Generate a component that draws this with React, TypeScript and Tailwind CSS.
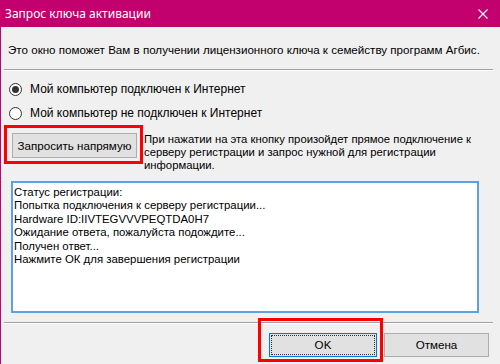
const font = { fontFamily: '"Liberation Sans", Arial, sans-serif' };

const Radio = ({ checked, label }: { checked?: boolean; label: string }) => (
  <div className="flex items-center h-[16px]">
    <div className="ml-[8px] w-[13px] h-[13px] rounded-full border border-[#333333] bg-white flex items-center justify-center">
      {checked && <div className="w-[7px] h-[7px] rounded-full bg-[#333333]" />}
    </div>
    <span className="ml-[8px] text-[12px] text-black">{label}</span>
  </div>
);

const Separator = ({ className }: { className?: string }) => (
  <div className={"h-[2px] border-t border-[#a0a0a0] border-b border-b-white " + (className || "")} />
);

export default function App() {
  const log = [
    "Статус регистрации:",
    "Попытка подключения к серверу регистрации...",
    "Hardware ID:IIVTEGVVVPEQTDA0H7",
    "Ожидание ответа, пожалуйста подождите...",
    "Получен ответ...",
    "Нажмите ОК для завершения регистрации",
  ];

  return (
    <div className="w-[500px] h-[364px] overflow-hidden bg-[#f0f0f0] border-l border-[#c2006e] flex flex-col" style={font}>
      {/* title bar */}
      <div className="h-[27px] shrink-0 bg-[#c2006e] flex items-center justify-between pl-[4px] pr-[12px]">
        <span className="text-white text-[12px]" style={{ fontFamily: '"Noto Sans", "Open Sans", sans-serif' }}>
          Запрос ключа активации
        </span>
        <svg width="10" height="10" viewBox="0 0 10 10">
          <path d="M0.5 0.5 L9.5 9.5 M9.5 0.5 L0.5 9.5" stroke="white" strokeWidth="1.1" />
        </svg>
      </div>

      <div className="flex flex-col">
        <p className="mt-[16px] ml-[7px] h-[14px] leading-[14px] text-[11.6px] text-black whitespace-nowrap">
          Это окно поможет Вам в получении лицензионного ключа к семейству программ Агбис.
        </p>

        <Separator className="mt-[12px] ml-[3px] mr-[7px]" />

        <div className="mt-[10px] flex flex-col gap-[8px]">
          <Radio checked label="Мой компьютер подключен к Интернет" />
          <Radio label="Мой компьютер не подключен к Интернет" />
        </div>

        <div className="mt-[12px] flex items-start h-[39px]">
          <div className="relative ml-[11px]">
            <button className="w-[125px] h-[25px] bg-[#e1e1e1] border border-[#adadad] text-[11.6px] text-black">
              Запросить напрямую
            </button>
            <div className="absolute -left-[8px] -right-[6px] -top-[8px] -bottom-[6px] border-[3px] border-[#ff0000]" />
          </div>
          <p className="ml-[7px] text-[11.3px] leading-[13px] text-black w-[336px]">
            При нажатии на эта кнопку произойдет прямое подключение к серверу регистрации и запрос нужной для регистрации информации.
          </p>
        </div>

        <div className="mt-[9px] ml-[10px] w-[468px] h-[132px] bg-white border-2 border-[#5ba1e3] px-[1px] pt-[3px]">
          {log.map((l) => (
            <div key={l} className="text-[11.4px] leading-[13.4px] text-black whitespace-nowrap">
              {l}
            </div>
          ))}
        </div>

        <Separator className="mt-[9px] ml-[3px] mr-[7px]" />

        <div className="mt-[9px] flex justify-end items-center pr-[11px] gap-[7px]">
          <div className="relative">
            <button className="w-[108px] h-[24px] bg-[#e1e1e1] border border-[#0078d7] text-[11.6px] text-black flex items-center justify-center p-[1px]">
              <span className="w-full h-full border border-dotted border-[#333333] flex items-center justify-center">OK</span>
            </button>
            <div className="absolute -left-[11px] -right-[6px] -top-[15px] -bottom-[5px] border-[3px] border-[#ff0000]" />
          </div>
          <button className="w-[105px] h-[24px] bg-[#e1e1e1] border border-[#adadad] text-[11.6px] text-black">
            Отмена
          </button>
        </div>
      </div>
    </div>
  );
}
